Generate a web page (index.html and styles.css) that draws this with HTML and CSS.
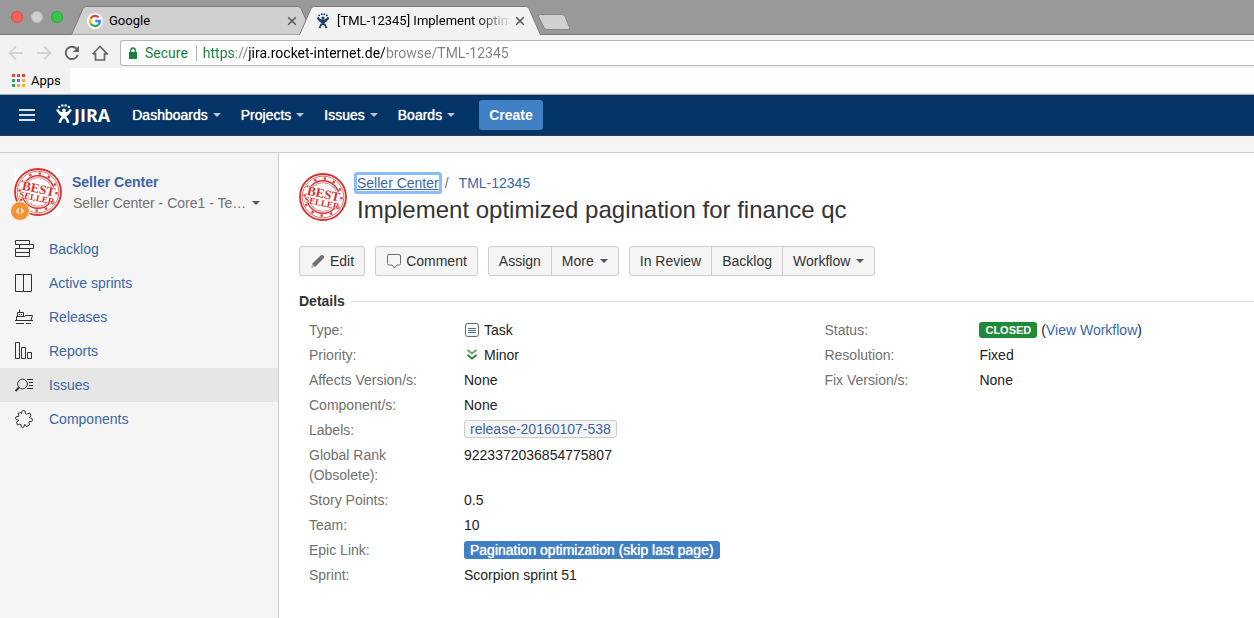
FILE: index.html
```html
<!DOCTYPE html>
<html lang="en">
<head>
<meta charset="utf-8">
<meta name="viewport" content="width=device-width, initial-scale=1">
<title>[TML-12345] Implement optimized pagination for finance qc</title>
<link rel="stylesheet" href="styles.css">
</head>
<body>
<svg class="defs" width="0" height="0" aria-hidden="true">
  <symbol id="stamp" viewBox="0 0 48 48">
    <g fill="none" stroke="#d9302c">
      <circle cx="24" cy="24" r="23" stroke-width="1.800"/>
      <circle cx="24" cy="24" r="20.800" stroke-width="0.700"/>
      <circle cx="24" cy="24" r="16.200" stroke-width="1.400"/>
      <circle cx="24" cy="24" r="14.300" stroke-width="0.600"/>
      <circle cx="24" cy="24" r="18.500" stroke-width="2.400" stroke-dasharray="2.400 7.290" opacity=".9"/>
    </g>
    <path d="M9 12.500L42 19.500 39 36 6 29z" fill="#fff"/>
  </symbol>
  <symbol id="charlie" viewBox="0 0 16 20">
    <g fill="currentColor">
      <circle cx="8" cy="6.300" r="1.900"/>
      <circle cx="3.200" cy="3" r="1.200"/><circle cx="6.400" cy="1.500" r="1.200"/><circle cx="9.600" cy="1.500" r="1.200"/><circle cx="12.800" cy="3" r="1.200"/>
    </g>
    <path d="M1.300 5.500C2.200 8.500 4.500 9.300 8 9.300S13.800 8.500 14.700 5.500M3.800 18.800C4.300 15.500 6 13.600 8.400 12 10.500 10.800 12 9.800 13 8M12.200 18.800C11.700 15.500 10 13.600 7.600 12 5.500 10.800 4 9.800 3 8" fill="none" stroke="currentColor" stroke-width="2.600"/>
  </symbol>
  <symbol id="close" viewBox="0 0 10 10"><path d="M1.200 1.200l7.600 7.600M8.800 1.200L1.200 8.800" stroke="#555" stroke-width="1.500" fill="none"/></symbol>
</svg>

<div class="browser">
  <div class="tabstrip">
    <div class="lights"><i class="light red"></i><i class="light grey"></i><i class="light green"></i></div>
    <div class="tab">
      <svg class="tab-shape" viewBox="0 0 242 29" preserveAspectRatio="none"><path d="M.5 28.500L12 2.500Q13 .5 15 .5H227Q229 .5 230 2.500L241.500 28.500" fill="#d0d0d0" stroke="#7c7c7c"/></svg>
      <svg class="favicon" viewBox="0 0 16 16"><circle cx="8" cy="8" r="8" fill="#fff"/><g fill="none" stroke-width="2.300"><path d="M3.700 5.500A5 5 0 0 1 11.600 4.400" stroke="#ea4335"/><path d="M3.700 5.500A5 5 0 0 0 3.700 10.500" stroke="#fbbc05"/><path d="M3.700 10.500A5 5 0 0 0 11.300 11.800" stroke="#34a853"/><path d="M11.300 11.800A5 5 0 0 0 13 8H8.300" stroke="#4285f4"/></g></svg>
      <span class="tab-title">Google</span>
      <button class="tab-close" aria-label="Close tab"><svg width="10" height="10"><use href="#close"/></svg></button>
    </div>
    <div class="tab active">
      <svg class="tab-shape" viewBox="0 0 242 29" preserveAspectRatio="none"><path d="M.5 29L12 2.500Q13 .5 15 .5H227Q229 .5 230 2.500L241.500 29" fill="#f2f2f2" stroke="#7c7c7c"/></svg>
      <svg class="favicon jira"><use href="#charlie"/></svg>
      <span class="tab-title fade">[TML-12345] Implement optimi</span>
      <button class="tab-close" aria-label="Close tab"><svg width="10" height="10"><use href="#close"/></svg></button>
    </div>
    <button class="new-tab" aria-label="New tab"><svg width="34" height="16" viewBox="0 0 34 16"><path d="M3 .5H25Q27 .5 28 2.500L32.500 13.500Q33 15.500 31 15.500H10Q8 15.500 7 13.500L1.500 2.500Q1 .5 3 .5z" fill="#d0d0d0" stroke="#858585"/></svg></button>
  </div>
  <div class="toolbar">
    <button class="tool" aria-label="Back"><svg width="16" height="16" viewBox="0 0 16 16"><path d="M15 8H2M8 1.500L1.500 8 8 14.500" fill="none" stroke="#d3d3d3" stroke-width="1.800"/></svg></button>
    <button class="tool" aria-label="Forward"><svg width="16" height="16" viewBox="0 0 16 16"><path d="M1 8H14M8 1.500L14.500 8 8 14.500" fill="none" stroke="#d3d3d3" stroke-width="1.800"/></svg></button>
    <button class="tool" aria-label="Reload"><svg width="16" height="16" viewBox="0 0 16 16"><path d="M13.800 9.800A6.200 6.200 0 1 1 12.500 3.700" fill="none" stroke="#666" stroke-width="2"/><path d="M15 .8V7H8.800z" fill="#666"/></svg></button>
    <button class="tool" aria-label="Home"><svg width="16" height="16" viewBox="0 0 16 16"><path d="M3.500 8V15H12.500V8M.8 9L8 1.500 15.200 9H12.500M3.500 9H.8" fill="none" stroke="#666" stroke-width="1.700"/></svg></button>
    <div class="omnibox">
      <svg width="8" height="12" viewBox="0 0 8 12"><path d="M0 5h8v7H0z" fill="#1a8039"/><path d="M1.800 5V3.200a2.200 2.200 0 0 1 4.400 0V5" fill="none" stroke="#1a8039" stroke-width="1.400"/></svg>
      <span class="secure">Secure</span>
      <input class="url" type="text" aria-label="Address" value="https://jira.rocket-internet.de/browse/TML-12345">
    </div>
  </div>
  <div class="bookmarks">
    <a class="apps" href="#">
      <svg width="13" height="13" viewBox="0 0 13 13"><path d="M0 0h3v3H0zM5 0h3v3H5zM10 0h3v3h-3z" fill="#ea4335"/><path d="M0 5h3v3H0zM0 10h3v3H0z" fill="#34a853"/><path d="M5 5h3v3H5z" fill="#4285f4"/><path d="M10 5h3v3h-3zM5 10h3v3H5zM10 10h3v3h-3z" fill="#f9ab2d"/></svg>
      Apps</a>
    <div class="bookmarks-space"></div>
  </div>
</div>

<header class="jira-header">
  <button class="menu" aria-label="Menu"><svg width="16" height="12" viewBox="0 0 16 12"><path d="M0 1h16M0 6h16M0 11h16" stroke="#d8e2ee" stroke-width="2"/></svg></button>
  <a class="logo" href="#"><svg width="16" height="20"><use href="#charlie"/></svg><span>JIRA</span></a>
  <nav class="top-nav">
    <button>Dashboards<i class="caret"></i></button>
    <button>Projects<i class="caret"></i></button>
    <button>Issues<i class="caret"></i></button>
    <button>Boards<i class="caret"></i></button>
  </nav>
  <button class="create">Create</button>
</header>
<div class="announce"></div>

<div class="page">
  <aside class="sidebar">
    <div class="project">
      <div class="project-avatar">
        <svg width="48" height="48" viewBox="0 0 48 48"><use href="#stamp"/><g class="stamp-text" transform="rotate(12 24 24)"><text x="24" y="25" font-size="13">BEST</text><text x="24" y="33" font-size="9">SELLER</text></g></svg>
        <span class="badge"><svg width="8" height="6" viewBox="0 0 8 6"><path d="M3 .5L.8 3 3 5.500M5 .5L7.200 3 5 5.500" fill="none" stroke="#fff" stroke-width="1.300"/></svg></span>
      </div>
      <div class="project-text">
        <a class="project-name" href="#">Seller Center</a>
        <button class="board"><span>Seller Center - Core1 - Te…</span><i class="caret"></i></button>
      </div>
    </div>
    <nav class="side-nav">
      <a href="#"><svg viewBox="0 0 20 20"><path d="M1.500 1.500h14v4h-14zM5.500 5.500h14v4h-14zM1.500 9.500h14v4h-14zM1.500 13.500h14v4h-14z"/></svg>Backlog</a>
      <a href="#"><svg viewBox="0 0 20 20"><path d="M1.500 1.500h16v17h-16zM9.500 1.500v17"/></svg>Active sprints</a>
      <a href="#"><svg viewBox="0 0 20 20"><path d="M1 13.500h18M2 16.500h8M12 16.500h5M2.500 13V9.500h8l1.500-1H18.500L17 13M3.500 9V5.500h6V9M5.500 5V2.500M5 7.500h1M7 7.500h1"/></svg>Releases</a>
      <a href="#"><svg viewBox="0 0 20 20"><path d="M1.500 1.500h4v16h-4zM7.500 6.500h4v11h-4zM13.500 11.500h4v6h-4z"/></svg>Reports</a>
      <a class="current" href="#"><svg viewBox="0 0 20 20"><circle cx="8.500" cy="9" r="4.900"/><path d="M5 12.500L1.500 16" stroke-width="2"/><path d="M13 4.500h6M15 7.500h4M15 10.500h4M13 13.500h6"/></svg>Issues</a>
      <a href="#"><svg viewBox="0 0 20 20"><path d="M7.500 4.500Q7.300 1.500 9.500 1.500T11.500 4.500Q12 5.500 13.500 4.800L16 4 17 7Q15 8 15.500 9 18.500 8.500 18.500 11T15.300 12.500Q14.500 13.500 15.500 16L12.500 17.500Q11.500 15 10.500 15.500 10.500 18.500 8.500 18.500T7 15.500Q6 14.700 3.500 16L2.500 13Q5 12 4.500 11 1.500 11.300 1.500 9T4.700 7.500Q5 6.500 4 4.500L6.500 3.500z"/></svg>Components</a>
    </nav>
  </aside>

  <main class="issue">
    <div class="issue-head">
      <svg width="48" height="48" viewBox="0 0 48 48"><use href="#stamp"/><g class="stamp-text" transform="rotate(12 24 24)"><text x="24" y="25" font-size="13">BEST</text><text x="24" y="33" font-size="9">SELLER</text></g></svg>
      <div>
        <div class="crumbs"><a class="focused" href="#">Seller Center</a><span class="slash">/</span><a href="#">TML-12345</a></div>
        <h1>Implement optimized pagination for finance qc</h1>
      </div>
    </div>
    <div class="actions">
      <div class="group"><button><svg width="16" height="16" viewBox="0 0 16 16"><path d="M2.500 10.500L10.500 2.500Q12 1.300 13.500 2.500T13.500 5.500L5.500 13.500 1.500 14.500z" fill="#707070"/><path d="M1.700 14.300l.9-3.400 2.600 2.600z" fill="#bbb"/></svg>Edit</button></div>
      <div class="group"><button><svg width="16" height="16" viewBox="0 0 16 16"><path d="M3 1.500h10q1.500 0 1.500 1.500v7.500q0 1.500-1.500 1.500h-2L8.500 15 6 12H3q-1.500 0-1.500-1.500V3Q1.500 1.500 3 1.500z" fill="none" stroke="#707070"/></svg>Comment</button></div>
      <div class="group"><button>Assign</button><button>More<i class="caret"></i></button></div>
      <div class="group"><button>In Review</button><button>Backlog</button><button>Workflow<i class="caret"></i></button></div>
    </div>
    <section>
      <h2><span>Details</span></h2>
      <div class="details">
        <dl>
          <dt>Type:</dt><dd><svg width="16" height="16" viewBox="0 0 16 16"><rect x="1.500" y="1.500" width="13" height="13" rx="2" fill="#fff" stroke="#666"/><path d="M4 6.500h8M4 8.500h8M4 10.500h8" stroke="#4a6785"/></svg>Task</dd>
          <dt>Priority:</dt><dd><svg width="16" height="16" viewBox="0 0 16 16"><path d="M3.500 3L8 6.500 12.500 3" fill="none" stroke="#67ab6a" stroke-width="2"/><path d="M3.500 8L8 11.500 12.500 8" fill="none" stroke="#2a8735" stroke-width="2"/></svg>Minor</dd>
          <dt>Affects Version/s:</dt><dd>None</dd>
          <dt>Component/s:</dt><dd>None</dd>
          <dt>Labels:</dt><dd><a class="label" href="#">release-20160107-538</a></dd>
          <dt>Global Rank (Obsolete):</dt><dd>9223372036854775807</dd>
          <dt>Story Points:</dt><dd>0.5</dd>
          <dt>Team:</dt><dd>10</dd>
          <dt>Epic Link:</dt><dd><a class="epic" href="#">Pagination optimization (skip last page)</a></dd>
          <dt>Sprint:</dt><dd>Scorpion sprint 51</dd>
        </dl>
        <dl>
          <dt>Status:</dt><dd><span class="status">CLOSED</span>(<a href="#">View Workflow</a>)</dd>
          <dt>Resolution:</dt><dd>Fixed</dd>
          <dt>Fix Version/s:</dt><dd>None</dd>
        </dl>
      </div>
    </section>
  </main>
</div>
</body>
</html>
```
FILE: styles.css
```css
* { box-sizing: border-box; }
body {
  margin: 0;
  min-height: 100vh;
  display: flex;
  flex-direction: column;
  background: #fff;
  color: #222;
  font: 14px/20px "Liberation Sans", Arial, sans-serif;
}
button { font: inherit; color: inherit; background: none; border: 0; padding: 0; margin: 0; }
a { color: #3b66a5; text-decoration: none; }
svg { display: block; flex: none; }
.defs { position: absolute; }
.stamp-text {
  fill: #d9302c;
  font-family: "Liberation Serif", serif;
  font-weight: 700;
  text-anchor: middle;
}
.caret {
  flex: none;
  border: 4px solid transparent;
  border-top-color: currentColor;
  border-bottom: 0;
}

/* Browser chrome */
.browser { background: #f2f2f2; border-bottom: 1px solid #a9a9a9; font-family: Roboto, sans-serif; color: #000; }
.tabstrip { display: flex; align-items: flex-end; height: 35px; padding: 0 11px; background: #999; box-shadow: inset 0 -1px #7c7c7c; }
.lights { display: flex; gap: 8px; width: 60px; align-self: flex-start; padding-top: 11px; }
.light { width: 12px; height: 12px; border-radius: 50%; border: 1px solid; }
.red { background: #fc5f57; border-color: #df4944; }
.grey { background: #cfcfcf; border-color: #bbb; }
.green { background: #33c84a; border-color: #24a93a; }
.tab { position: relative; z-index: 1; display: flex; align-items: center; width: 242px; height: 29px; padding: 0 16px; font-size: 13px; line-height: 16px; }
.tab + .tab { margin-left: -14px; }
.tab.active { z-index: 2; }
.tab > * { position: relative; }
.tab .tab-shape { position: absolute; inset: 0; width: 100%; height: 100%; }
.favicon { width: 16px; height: 16px; margin-right: 6px; }
.tab-title { flex: 1; min-width: 0; overflow: hidden; white-space: nowrap; }
.fade { -webkit-mask-image: linear-gradient(90deg, #000 80%, transparent); mask-image: linear-gradient(90deg, #000 80%, transparent); }
.jira { color: #1d3f73; }
.tab-close { padding: 0 0 0 4px; }
.new-tab { margin: 0 0 5px -4px; }
.toolbar { display: flex; align-items: center; gap: 12px; height: 33px; padding: 4px 0 2px 8px; }
.tool { width: 16px; }
.omnibox { flex: 1; display: flex; align-items: center; height: 26px; padding-left: 8px; border: 1px solid #b5b5b5; border-right: 0; border-radius: 3px 0 0 3px; background: #fff; }
.secure { margin-left: 8px; padding-right: 8px; border-right: 1px solid #b0b0b0; color: #1a8039; line-height: 16px; }
.url {
  flex: 1;
  min-width: 0;
  padding: 0;
  margin-left: 6px;
  border: 0;
  outline: 0;
  font: 14px/20px Roboto, sans-serif;
  color: transparent;
  background: linear-gradient(90deg, #1a8039 32px, #808080 32px 46px, #000 46px 182px, #808080 182px) text;
  -webkit-background-clip: text;
}
.bookmarks { display: flex; height: 26px; padding-bottom: 2px; }
.apps { display: flex; align-items: center; gap: 6px; width: 70px; padding: 1px 0 0 12px; color: #000; font-size: 13px; }
.bookmarks-space { flex: 1; background: #fff; }

/* Application header */
.jira-header { display: flex; align-items: center; height: 41px; padding-left: 19px; background: #053466; border-bottom: 1px solid #2e3d54; color: #fff; }
.logo { display: flex; align-items: center; gap: 2px; margin: 0 12px 0 21px; color: #fff; font: 700 18px/20px "Open Sans", sans-serif; }
.logo svg { margin-bottom: 2px; }
.top-nav { display: flex; }
.top-nav button { display: flex; align-items: center; gap: 5px; padding: 0 10px; text-shadow: 0 0 1px #fff; }
.top-nav .caret { border-top-color: #b9c7d8; }
.create { height: 30px; margin-left: 14px; padding: 0 10px; border-radius: 3px; background: #3f7fc3; font-weight: 700; }
.announce { height: 17px; background: #f5f5f5; border-bottom: 1px solid #ccc; }

/* Project sidebar */
.page { flex: 1; display: flex; }
.sidebar { flex: none; width: 279px; padding-top: 15px; background: #f5f5f5; border-right: 1px solid #ccc; }
.project { display: flex; gap: 10px; padding: 0 16px 0 14px; }
.project-avatar { position: relative; flex: none; width: 48px; height: 48px; background: #fff; border-radius: 3px; }
.badge { position: absolute; left: -4px; bottom: -5px; display: flex; align-items: center; justify-content: center; width: 20px; height: 20px; border: 1px solid #f5f5f5; border-radius: 50%; background: #f79232; }
.project-text { min-width: 0; padding-top: 4px; }
.project-name { display: block; font-weight: 700; }
.board { display: flex; align-items: center; gap: 6px; margin-top: 1px; padding-left: 1px; color: #707070; white-space: nowrap; }
.board .caret { border-top-color: #555; }
.side-nav { margin-top: 16px; }
.side-nav a { display: flex; align-items: center; gap: 15px; height: 34px; padding-left: 14px; }
.side-nav svg { width: 20px; height: 20px; fill: none; stroke: #333; }
.side-nav .current { background: #e6e6e6; }

/* Issue */
.issue { flex: 1; min-width: 0; padding: 20px 0 20px 20px; }
.issue-head { display: flex; gap: 10px; }
.crumbs { display: flex; line-height: 20px; }
.focused { text-decoration: underline; box-shadow: 0 0 0 3px #8bbcf7; border-radius: 1px; line-height: 16px; margin: 2px 0; }
.slash { margin: 0 10px 0 6px; color: #707070; }
h1 { margin: 2px 0 0; font-size: 24px; line-height: 30px; font-weight: 400; color: #333; }
.actions { display: flex; gap: 10px; margin-top: 21px; }
.group { display: flex; }
.group button { display: flex; align-items: center; height: 30px; padding: 0 10px; border: 1px solid #ccc; background: #f5f5f5; color: #333; white-space: nowrap; }
.group button + button { margin-left: -1px; }
.group button:first-child { border-radius: 3px 0 0 3px; }
.group button:last-child { border-radius: 0 3px 3px 0; }
.group button:only-child { border-radius: 3px; }
.group svg { margin-right: 4px; }
.group .caret { margin-left: 6px; border-top-color: #555; }
h2 { display: flex; align-items: center; gap: 6px; margin: 15px 0 9px; font-size: 14px; line-height: 20px; color: #333; }
h2::after { content: ""; flex: 1; height: 1px; background: #ddd; }
.details { display: grid; grid-template-columns: 6fr 5fr; padding-left: 10px; align-items: start; }
dl { display: grid; grid-template-columns: 155px 1fr; row-gap: 5px; margin: 0; }
dt { color: #707070; padding-right: 30px; }
dd { margin: 0; display: flex; align-items: center; height: 20px; }
dd svg { margin-right: 4px; }
.label { padding: 0 5px; margin-bottom: 2px; border: 1px solid #ccc; border-radius: 3px; background: #f5f5f5; line-height: 16px; }
.epic { padding: 0 6px; border-radius: 3px; background: #3f7fc3; color: #fff; line-height: 18px; text-shadow: 0 0 1px #fff; }
.status { margin-right: 4px; padding: 0 6px; border-radius: 3px; background: #1f8a37; color: #fff; font-size: 11px; font-weight: 700; line-height: 16px; }
```
